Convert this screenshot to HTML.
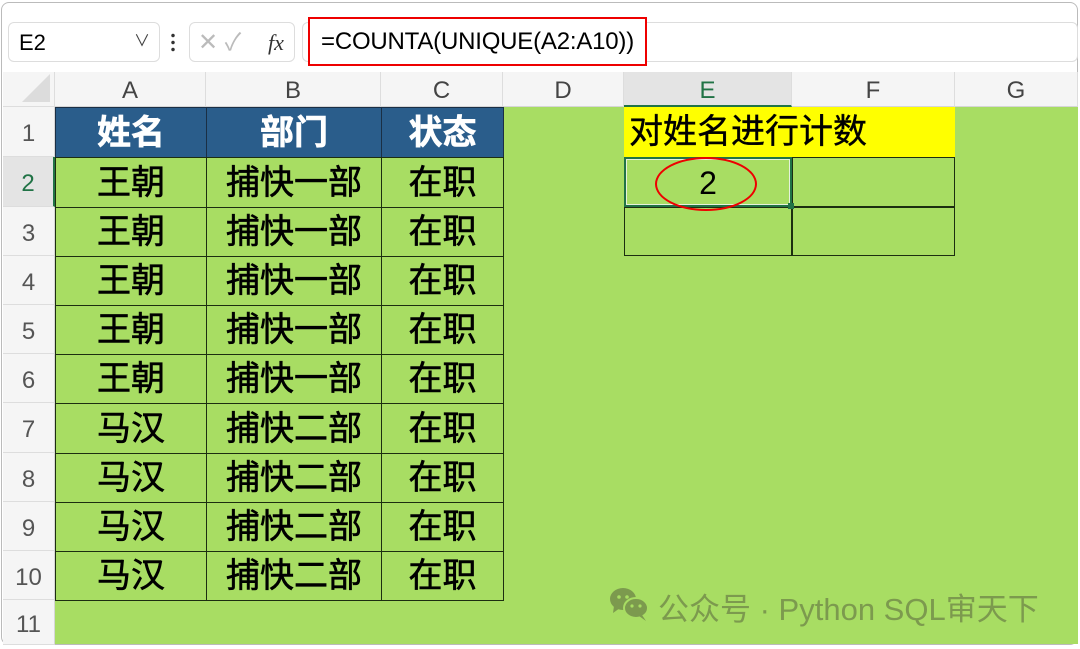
<!DOCTYPE html>
<html><head><meta charset="utf-8"><style>
*{margin:0;padding:0;box-sizing:border-box}
body{width:1080px;height:647px;background:#fff;position:relative;overflow:hidden;font-family:"Liberation Sans","Noto Sans CJK SC",sans-serif}
.a{position:absolute}
.frame{left:1px;top:2px;width:1077px;height:643px;border:1px solid #bbb;border-radius:8px}
.grid{left:55px;top:107px;width:1023px;height:537px;background:#a8dd63}
.colh{top:72px;height:35px;background:#f5f5f5;border-right:1px solid #ddd;border-bottom:1px solid #d6d6d6;text-align:center;font-size:24px;line-height:38px;color:#444}
.rowh{left:3px;width:52px;background:#f5f5f5;border-bottom:1px solid #ddd;border-right:1px solid #d6d6d6;text-align:center;font-size:24px;color:#555}
.c{border:1px solid #1c2e10;text-align:center;font-size:34px;color:#000;-webkit-text-stroke:0.6px #000;font-family:"Liberation Sans","Noto Sans CJK SC",sans-serif}
.h{background:#2a5d8b;color:#fff;font-weight:bold;border-color:#1a2f45;-webkit-text-stroke:0.6px #fff}
</style></head><body>
<div class="a frame"></div>
<div class="a" style="left:8px;top:22px;width:152px;height:40px;border:1px solid #ddd;border-radius:6px;font-size:22px;line-height:40px;padding-left:10px">E2<span style="position:absolute;left:125px;top:-1px;font-size:16px;color:#444">&#x2228;</span></div>
<div class="a" style="left:171px;top:32px;width:4px;height:20px;background:radial-gradient(circle,#333 1.5px,transparent 2px) 0 0/4px 7px"></div>
<div class="a" style="left:189px;top:22px;width:106px;height:40px;border:1px solid #ddd;border-radius:6px;color:#bbb;font-size:24px;line-height:40px;padding-left:8px">✕ <span>✓</span><span style="position:absolute;left:78px;color:#333;font-family:'Liberation Serif',serif;font-style:italic;font-size:22px">fx</span></div>
<div class="a" style="left:302px;top:22px;width:776px;height:40px;border:1px solid #ddd;border-radius:6px"></div>
<div class="a" style="left:308px;top:17px;width:339px;height:49px;border:2px solid #e00;background:#fff;font-size:24px;line-height:46px;padding-left:11px;letter-spacing:-0.2px">=COUNTA(UNIQUE(A2:A10))</div>
<div class="a" style="left:3px;top:72px;width:52px;height:35px;background:#f5f5f5;border-right:1px solid #ddd;border-bottom:1px solid #ddd"><div style="position:absolute;right:4px;bottom:4px;width:0;height:0;border-left:28px solid transparent;border-bottom:28px solid #dcdcdc"></div></div>
<div class="a colh" style="left:55px;width:151px">A</div>
<div class="a colh" style="left:206px;width:175px">B</div>
<div class="a colh" style="left:381px;width:122px">C</div>
<div class="a colh" style="left:503px;width:121px">D</div>
<div class="a colh" style="left:624px;width:168px;background:#e4e4e4;color:#217346;border-bottom:2px solid #217346">E</div>
<div class="a colh" style="left:792px;width:163px">F</div>
<div class="a colh" style="left:955px;width:123px">G</div>
<div class="a grid"></div>
<div id="rows"></div>
<div class="a" style="left:624px;top:107px;width:331px;height:50px;background:#ffff00;font-size:34px;line-height:50px;padding-left:5px;-webkit-text-stroke:0.4px #000">对姓名进行计数</div>
<div class="a" style="left:624px;top:157px;width:331px;height:99px;border:1.5px solid #1c2e10"></div>
<div class="a" style="left:791px;top:157px;width:1.5px;height:99px;background:#1c2e10"></div>
<div class="a" style="left:624px;top:206px;width:331px;height:1.5px;background:#1c2e10"></div>
<div class="a" style="left:624px;top:157px;width:168px;height:50px;border:2px solid #217346;box-shadow:inset 0 0 0 1px #e6f2dc;text-align:center;font-size:32px;line-height:48px">2</div>
<div class="a" style="left:788px;top:203px;width:6px;height:6px;background:#217346"></div>
<div class="a" style="left:655px;top:157px;width:102px;height:54px;border:2px solid #e00;border-radius:50%"></div>
<svg class="a" style="left:608px;top:584px" width="44" height="40" viewBox="0 0 44 40"><ellipse cx="15" cy="15" rx="13" ry="11" fill="#7c9a4e"/><path d="M6 22 L5 29 L12 24z" fill="#7c9a4e"/><ellipse cx="28" cy="24" rx="12" ry="10" fill="#7c9a4e" stroke="#a8dd63" stroke-width="2"/><path d="M34 31 L38 37 L31 32z" fill="#7c9a4e"/><circle cx="11" cy="13" r="1.8" fill="#a8dd63"/><circle cx="19" cy="13" r="1.8" fill="#a8dd63"/><circle cx="24" cy="22" r="1.6" fill="#a8dd63"/><circle cx="32" cy="22" r="1.6" fill="#a8dd63"/></svg>
<div class="a" style="left:658px;top:584px;font-size:31px;color:#7c9a4e;white-space:nowrap">公众号 · Python SQL审天下</div>
<script>
var rows=document.getElementById('rows'),h='';
var tops=[107,157,207,256,305,354,403,453,502,551,600,645];
for(var i=0;i<11;i++){var t=tops[i],hh=tops[i+1]-t;var col=i==1?'color:#217346;background:#e4e4e4;border-right:2px solid #217346':'';
h+='<div class="a rowh" style="top:'+t+'px;height:'+hh+'px;line-height:'+(hh+4)+'px;'+col+'">'+(i+1)+'</div>';}
var data=[['姓名','部门','状态']];
for(var i=0;i<5;i++)data.push(['王朝','捕快一部','在职']);
for(var i=0;i<4;i++)data.push(['马汉','捕快二部','在职']);
var xs=[55,206,381,503];
for(var r=0;r<10;r++){var t=tops[r],hh=tops[r+1]-t;for(var c=0;c<3;c++){
h+='<div class="a c'+(r==0?' h':'')+'" style="left:'+xs[c]+'px;top:'+t+'px;width:'+(xs[c+1]-xs[c]+1)+'px;height:'+(hh+1)+'px;line-height:'+hh+'px">'+data[r][c]+'</div>';}}
rows.innerHTML=h;
</script>
</body></html>
